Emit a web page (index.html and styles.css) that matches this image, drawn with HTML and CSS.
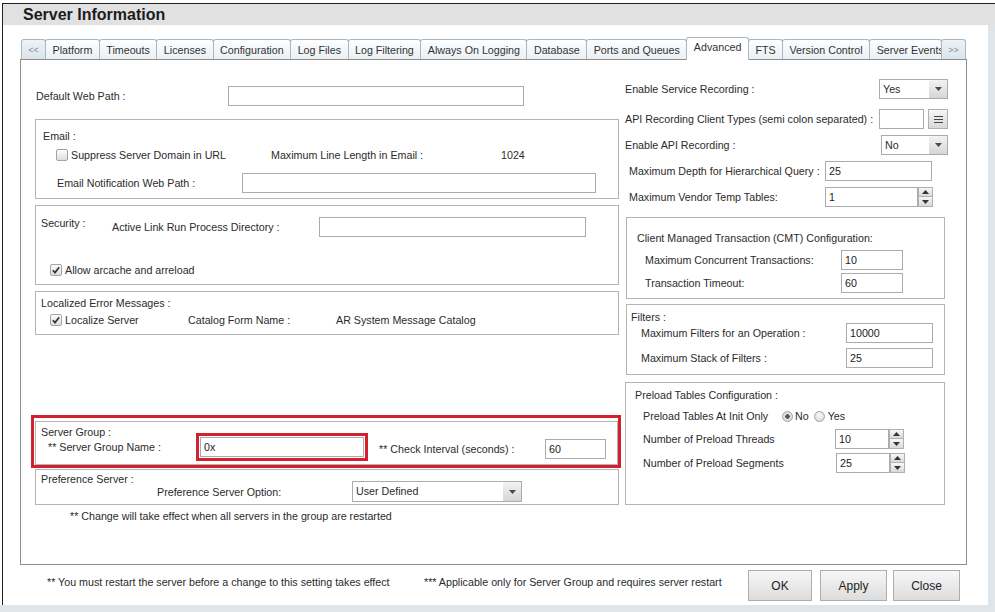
FILE: index.html
```html
<!DOCTYPE html>
<html lang="en">
<head>
    <meta charset="UTF-8">
    <title>Server Information</title>
    <link rel="stylesheet" href="styles.css">
</head>
<body>

<div class="frame">
    <div class="title-bar">Server Information</div>

    <div class="content">
        <div class="tabs">
            <div class="tab tab-nav">&lt;&lt;</div>
            <div class="tab">Platform</div>
            <div class="tab">Timeouts</div>
            <div class="tab">Licenses</div>
            <div class="tab">Configuration</div>
            <div class="tab">Log Files</div>
            <div class="tab">Log Filtering</div>
            <div class="tab">Always On Logging</div>
            <div class="tab">Database</div>
            <div class="tab">Ports and Queues</div>
            <div class="tab active">Advanced</div>
            <div class="tab">FTS</div>
            <div class="tab">Version Control</div>
            <div class="tab tab-cut">Server Events</div>
            <div class="tab tab-nav">&gt;&gt;</div>
        </div>

        <div class="panel">
            <!-- left column -->
            <div class="col-left">
                <div class="web-path">
                    <span class="web-path-lbl">Default Web Path :</span>
                    <input type="text" class="web-path-input">
                </div>

                <div class="group email-group">
                    <div class="group-title">Email :</div>
                    <div class="email-opts">
                        <span class="check-item suppress">
                            <span class="check"></span>Suppress Server Domain in URL
                        </span>
                        <span class="max-line-lbl">Maximum Line Length in Email :</span>
                        <span>1024</span>
                    </div>
                    <div class="email-path">
                        <span class="email-path-lbl">Email Notification Web Path :</span>
                        <input type="text" class="email-path-input">
                    </div>
                </div>

                <div class="group security-group">
                    <div class="security-row">
                        <span class="group-title security-title">Security :</span>
                        <span class="alrp-lbl">Active Link Run Process Directory :</span>
                        <input type="text" class="alrp-input">
                    </div>
                    <div class="security-check">
                        <span class="check-item">
                            <span class="check checked"><svg width="12" height="12" viewBox="0 0 12 12"><path d="M2.8 6.2l2.2 2.4 4.2-5.4" fill="none" stroke="#333" stroke-width="1.7"/></svg></span>Allow arcache and arreload
                        </span>
                    </div>
                </div>

                <div class="group local-group">
                    <div class="group-title">Localized Error Messages :</div>
                    <div class="local-row">
                        <span class="check-item localize">
                            <span class="check checked"><svg width="12" height="12" viewBox="0 0 12 12"><path d="M2.8 6.2l2.2 2.4 4.2-5.4" fill="none" stroke="#333" stroke-width="1.7"/></svg></span>Localize Server
                        </span>
                        <span class="catalog-lbl">Catalog Form Name :</span>
                        <span>AR System Message Catalog</span>
                    </div>
                </div>

                <div class="highlight">
                    <div class="group sg-group">
                        <div class="group-title sg-title">Server Group :</div>
                        <div class="sg-row">
                            <span class="sg-name-lbl">** Server Group Name :</span>
                            <span class="mark"><input type="text" class="sg-name-input" value="0x"></span>
                            <span class="interval-lbl">** Check Interval (seconds) :</span>
                            <input type="text" class="interval-input" value="60">
                        </div>
                    </div>
                </div>

                <div class="group pref-group">
                    <div class="group-title pref-title">Preference Server :</div>
                    <div class="pref-row">
                        <span class="pref-lbl">Preference Server Option:</span>
                        <div class="select pref-select">
                            <span class="select-text">User Defined</span>
                            <span class="select-arrow"><svg width="7" height="4" viewBox="0 0 7 4"><path d="M0 0h7L3.5 4z" fill="#4a4a4a"/></svg></span>
                        </div>
                    </div>
                </div>

                <div class="change-note">** Change will take effect when all servers in the group are restarted</div>
            </div>

            <!-- right column -->
            <div class="col-right">
                <div class="rrow">
                    <span>Enable Service Recording :</span>
                    <div class="select service-select">
                        <span class="select-text">Yes</span>
                        <span class="select-arrow"><svg width="7" height="4" viewBox="0 0 7 4"><path d="M0 0h7L3.5 4z" fill="#4a4a4a"/></svg></span>
                    </div>
                </div>
                <div class="rrow api-types">
                    <span>API Recording Client Types (semi colon separated) :</span>
                    <input type="text" class="api-types-input">
                    <span class="list-btn"><svg width="9" height="7" viewBox="0 0 9 7"><path d="M0 .5h9M0 3.5h9M0 6.5h9" stroke="#444" stroke-width="1"/></svg></span>
                </div>
                <div class="rrow api-enable">
                    <span>Enable API Recording :</span>
                    <div class="select api-select">
                        <span class="select-text">No</span>
                        <span class="select-arrow"><svg width="7" height="4" viewBox="0 0 7 4"><path d="M0 0h7L3.5 4z" fill="#4a4a4a"/></svg></span>
                    </div>
                </div>
                <div class="rrow num-row">
                    <span class="num-lbl">Maximum Depth for Hierarchical Query :</span>
                    <input type="text" class="depth-input" value="25">
                </div>
                <div class="rrow num-row">
                    <span class="num-lbl">Maximum Vendor Temp Tables:</span>
                    <input type="text" class="vendor-input" value="1">
                    <span class="spin">
                        <span class="spin-btn"><svg width="7" height="4" viewBox="0 0 7 4"><path d="M0 4h7L3.5 0z" fill="#333"/></svg></span>
                        <span class="spin-btn"><svg width="7" height="4" viewBox="0 0 7 4"><path d="M0 0h7L3.5 4z" fill="#333"/></svg></span>
                    </span>
                </div>

                <div class="group cmt-group">
                    <div class="group-title">Client Managed Transaction (CMT) Configuration:</div>
                    <div class="grow cmt-row first">
                        <span class="cmt-lbl">Maximum Concurrent Transactions:</span>
                        <input type="text" class="cmt-input" value="10">
                    </div>
                    <div class="grow cmt-row">
                        <span class="cmt-lbl">Transaction Timeout:</span>
                        <input type="text" class="cmt-input" value="60">
                    </div>
                </div>

                <div class="group filters-group">
                    <div class="group-title">Filters :</div>
                    <div class="grow filter-row first">
                        <span class="filter-lbl">Maximum Filters for an Operation :</span>
                        <input type="text" class="filter-input" value="10000">
                    </div>
                    <div class="grow filter-row">
                        <span class="filter-lbl">Maximum Stack of Filters :</span>
                        <input type="text" class="filter-input" value="25">
                    </div>
                </div>

                <div class="group preload-group">
                    <div class="group-title">Preload Tables Configuration :</div>
                    <div class="grow radio-row">
                        <span class="radio-lbl">Preload Tables At Init Only</span>
                        <span class="radio checked"></span>No
                        <span class="radio second"></span>Yes
                    </div>
                    <div class="grow preload-row threads">
                        <span class="threads-lbl">Number of Preload Threads</span>
                        <input type="text" class="preload-input" value="10">
                        <span class="spin">
                            <span class="spin-btn"><svg width="7" height="4" viewBox="0 0 7 4"><path d="M0 4h7L3.5 0z" fill="#333"/></svg></span>
                            <span class="spin-btn"><svg width="7" height="4" viewBox="0 0 7 4"><path d="M0 0h7L3.5 4z" fill="#333"/></svg></span>
                        </span>
                    </div>
                    <div class="grow preload-row segments">
                        <span class="segments-lbl">Number of Preload Segments</span>
                        <input type="text" class="preload-input" value="25">
                        <span class="spin">
                            <span class="spin-btn"><svg width="7" height="4" viewBox="0 0 7 4"><path d="M0 4h7L3.5 0z" fill="#333"/></svg></span>
                            <span class="spin-btn"><svg width="7" height="4" viewBox="0 0 7 4"><path d="M0 0h7L3.5 4z" fill="#333"/></svg></span>
                        </span>
                    </div>
                </div>
            </div>
        </div>

        <div class="footer">
            <span class="note note-restart">** You must restart the server before a change to this setting takes effect</span>
            <span class="note">*** Applicable only for Server Group and requires server restart</span>
            <div class="buttons">
                <button class="btn btn-ok">OK</button>
                <button class="btn">Apply</button>
                <button class="btn btn-close">Close</button>
            </div>
        </div>
    </div>
</div>
<div class="status-strip"></div>

</body>
</html>
```

FILE: styles.css
```css
body {
    margin: 0;
    font-family: "Liberation Sans", Arial, sans-serif;
    font-size: 10.7px;
    color: #2b2b2b;
    background: #fff;
    white-space: nowrap;
}

/* window frame */
.frame {
    margin: 3px 0 0 2px;
    border-top: 1px solid #222;
    border-left: 1px solid #222;
    background: #dfe6eb;
}
.title-bar {
    height: 21px;
    padding-left: 20px;
    background: #e1e1e1;
    font-size: 16px;
    font-weight: bold;
    line-height: 21px;
    color: #1c1c1c;
}
.content {
    width: 985px;
    height: 580px;
    padding-top: 12px;
    box-sizing: border-box;
    background: #fff;
}
.status-strip {
    height: 7px;
    background: #dfe6eb;
}

/* tabs */
.tabs {
    display: flex;
    align-items: flex-end;
    height: 22px;
    width: 945px;
    margin-left: 18px;
}
.tab {
    height: 20px;
    box-sizing: border-box;
    padding: 0 6.5px;
    margin-left: -1px;
    border: 1px solid #aab6c1;
    border-bottom: none;
    border-radius: 3px 3px 0 0;
    background: linear-gradient(#fdfeff, #eaf0f4);
    line-height: 20px;
    color: #333;
}
.tab:first-child {
    margin-left: 0;
}
.tab.active {
    height: 23px;
    margin-bottom: -1px;
    background: #fff;
    line-height: 18px;
    position: relative;
    z-index: 1;
}
.tab-nav {
    width: 25px;
    padding: 0;
    text-align: center;
    font-size: 9px;
    color: #8a8a8a;
    background: linear-gradient(#eef3f7, #dbe4ec);
}
.tab-cut {
    flex: 1;
    min-width: 0;
    overflow: hidden;
}

/* main panel */
.panel {
    display: grid;
    grid-template-columns: 584px 323px;
    column-gap: 6px;
    align-items: start;
    width: 947px;
    height: 506px;
    margin-left: 17px;
    padding: 19px 0 0 14px;
    box-sizing: border-box;
    border: 1px solid #8d8d8d;
}

input {
    height: 20px;
    box-sizing: border-box;
    margin: 0;
    padding: 0 3px;
    border: 1px solid #ababab;
    font-family: inherit;
    font-size: 10.7px;
    color: #222;
    background: #fff;
}

.group {
    box-sizing: border-box;
    border: 1px solid #b5b5b5;
}
.group-title {
    line-height: 16px;
}

.check-item {
    display: flex;
    align-items: center;
}
.check {
    display: inline-block;
    width: 12px;
    height: 12px;
    box-sizing: border-box;
    margin-right: 3px;
    border: 1px solid #a3a3a3;
    border-radius: 2px;
    background: linear-gradient(#fdfdfd, #dedede);
    position: relative;
}
.check svg {
    position: absolute;
    left: -1px;
    top: -1px;
}

.select {
    display: flex;
    height: 20px;
    box-sizing: border-box;
    border: 1px solid #ababab;
    background: #fff;
}
.select-text {
    flex: 1;
    padding-left: 3px;
    line-height: 19px;
}
.select-arrow {
    display: flex;
    align-items: center;
    justify-content: center;
    width: 18px;
    background: linear-gradient(#f3f3f3, #d6d6d6);
}

.spin {
    display: flex;
    flex-direction: column;
    width: 15px;
    height: 20px;
}
.spin-btn {
    display: flex;
    align-items: center;
    justify-content: center;
    height: 10px;
    box-sizing: border-box;
    border: 1px solid #b0b0b0;
    background: linear-gradient(#f7f7f7, #d8d8d8);
}
.spin-btn + .spin-btn {
    border-top: none;
}

/* left column */
.col-left {
    padding-top: 7px;
}
.web-path {
    display: flex;
    align-items: center;
    height: 20px;
    padding-left: 1px;
}
.web-path-lbl {
    width: 192px;
}
.web-path-input {
    width: 296px;
}

.email-group {
    height: 80px;
    margin-top: 13px;
    padding: 8px 0 0 7px;
}
.email-opts {
    display: flex;
    align-items: center;
    margin-top: 3px;
    padding-left: 13px;
    line-height: 16px;
}
.suppress {
    width: 215px;
}
.max-line-lbl {
    width: 230px;
}
.email-path {
    display: flex;
    align-items: center;
    margin-top: 10px;
    padding-left: 14px;
}
.email-path-lbl {
    width: 185px;
}
.email-path-input {
    width: 354px;
}

.security-group {
    height: 80px;
    margin-top: 6px;
    padding: 11px 0 0 5px;
}
.security-row {
    display: flex;
    align-items: center;
    height: 20px;
}
.security-title {
    width: 71px;
    align-self: flex-start;
    line-height: 12px;
}
.alrp-lbl {
    width: 207px;
}
.alrp-input {
    width: 267px;
}
.security-check {
    margin-top: 25px;
    padding-left: 9px;
    line-height: 16px;
}

.local-group {
    height: 44px;
    margin-top: 6px;
    padding: 3px 0 0 5px;
}
.local-row {
    display: flex;
    align-items: center;
    margin-top: 1px;
    padding-left: 9px;
    line-height: 16px;
}
.localize {
    width: 138px;
}
.catalog-lbl {
    width: 148px;
}

.highlight {
    margin: 80px -2px 0 -4px;
    padding: 3px 0 0 1px;
    border: 3px solid #d3202f;
}
.sg-group {
    height: 44px;
    padding: 5px 0 0 5px;
}
.sg-title {
    line-height: 11px;
}
.sg-row {
    display: flex;
    align-items: center;
    margin-top: -5px;
    padding-left: 7px;
}
.sg-name-lbl {
    width: 148px;
}
.mark {
    display: flex;
    padding: 1px;
    border: 3px solid #d3202f;
}
.sg-name-input {
    width: 164px;
}
.interval-lbl {
    width: 166px;
    margin: 4px 0 0 11px;
}
.interval-input {
    width: 61px;
    margin-top: 4px;
}

.pref-group {
    height: 36px;
    margin-top: 1px;
    padding: 3px 0 0 5px;
}
.pref-title {
    line-height: 12px;
}
.pref-row {
    display: flex;
    align-items: center;
    margin-top: -4px;
    padding-left: 116px;
}
.pref-lbl {
    width: 195px;
}
.pref-select {
    width: 170px;
    height: 21px;
}
.change-note {
    margin-top: 4px;
    padding-left: 35px;
    line-height: 14px;
}

/* right column */
.rrow {
    display: flex;
    align-items: center;
    height: 20px;
}
.service-select {
    width: 69px;
    margin-left: auto;
}
.api-types {
    margin-top: 10px;
}
.api-types-input {
    width: 45px;
    margin-left: auto;
}
.list-btn {
    display: flex;
    align-items: center;
    justify-content: center;
    width: 20px;
    height: 20px;
    box-sizing: border-box;
    margin-left: 4px;
    border: 1px solid #b0b0b0;
    background: linear-gradient(#f7f7f7, #d8d8d8);
}
.api-enable {
    margin-top: 6px;
}
.api-select {
    width: 67px;
    margin-left: auto;
}
.num-row {
    margin-top: 6px;
    padding-left: 4px;
}
.num-lbl {
    width: 196px;
}
.depth-input {
    width: 107px;
}
.vendor-input {
    width: 93px;
}

.grow {
    display: flex;
    align-items: center;
}
.cmt-group {
    height: 82px;
    margin: 10px 3px 0 1px;
    padding: 12px 0 0 10px;
}
.cmt-row {
    margin-top: 3px;
    padding-left: 8px;
}
.cmt-row.first {
    margin-top: 4px;
}
.cmt-lbl {
    width: 196px;
}
.cmt-input {
    width: 62px;
}

.filters-group {
    height: 71px;
    margin: 5px 3px 0 1px;
    padding: 4px 0 0 4px;
}
.filter-row {
    margin-top: 5px;
    padding-left: 10px;
}
.filter-row.first {
    margin-top: -2px;
}
.filter-lbl {
    width: 205px;
}
.filter-input {
    width: 87px;
}

.preload-group {
    height: 123px;
    margin: 7px 3px 0 0;
    padding: 4px 0 0 9px;
}
.radio-row {
    margin-top: 5px;
    padding-left: 8px;
    line-height: 16px;
}
.radio-lbl {
    width: 139px;
}
.radio {
    display: inline-block;
    width: 11px;
    height: 11px;
    box-sizing: border-box;
    margin-right: 2px;
    border: 1px solid #a5a5a5;
    border-radius: 50%;
    background: radial-gradient(circle at 50% 35%, #fafafa, #d4d4d4);
}
.radio.checked {
    background: radial-gradient(circle, #555 0, #555 2px, #e6e6e6 2.5px, #d0d0d0 100%);
}
.radio.second {
    margin-left: 5px;
    margin-right: 3px;
}
.preload-row {
    padding-left: 8px;
}
.threads {
    margin-top: 5px;
}
.segments {
    margin-top: 4px;
}
.threads-lbl {
    width: 192px;
}
.segments-lbl {
    width: 193px;
}
.preload-input {
    width: 54px;
}

/* footer */
.footer {
    display: flex;
    align-items: flex-start;
    width: 947px;
    height: 40px;
    margin-left: 17px;
    padding-top: 5px;
    box-sizing: border-box;
}
.note {
    line-height: 24px;
}
.note-restart {
    width: 377px;
    margin-left: 27px;
}
.buttons {
    display: flex;
    margin: 0 7px 0 auto;
}
.btn {
    width: 67px;
    height: 31px;
    margin-left: 6px;
    border: 1px solid #adadad;
    background: linear-gradient(#f7f7f7, #dcdcdc);
    font-family: inherit;
    font-size: 12px;
    color: #222;
}
.btn-ok {
    width: 64px;
}
.btn-close {
    margin-left: 6px;
}
.btn-ok + .btn {
    margin-left: 8px;
}
```
